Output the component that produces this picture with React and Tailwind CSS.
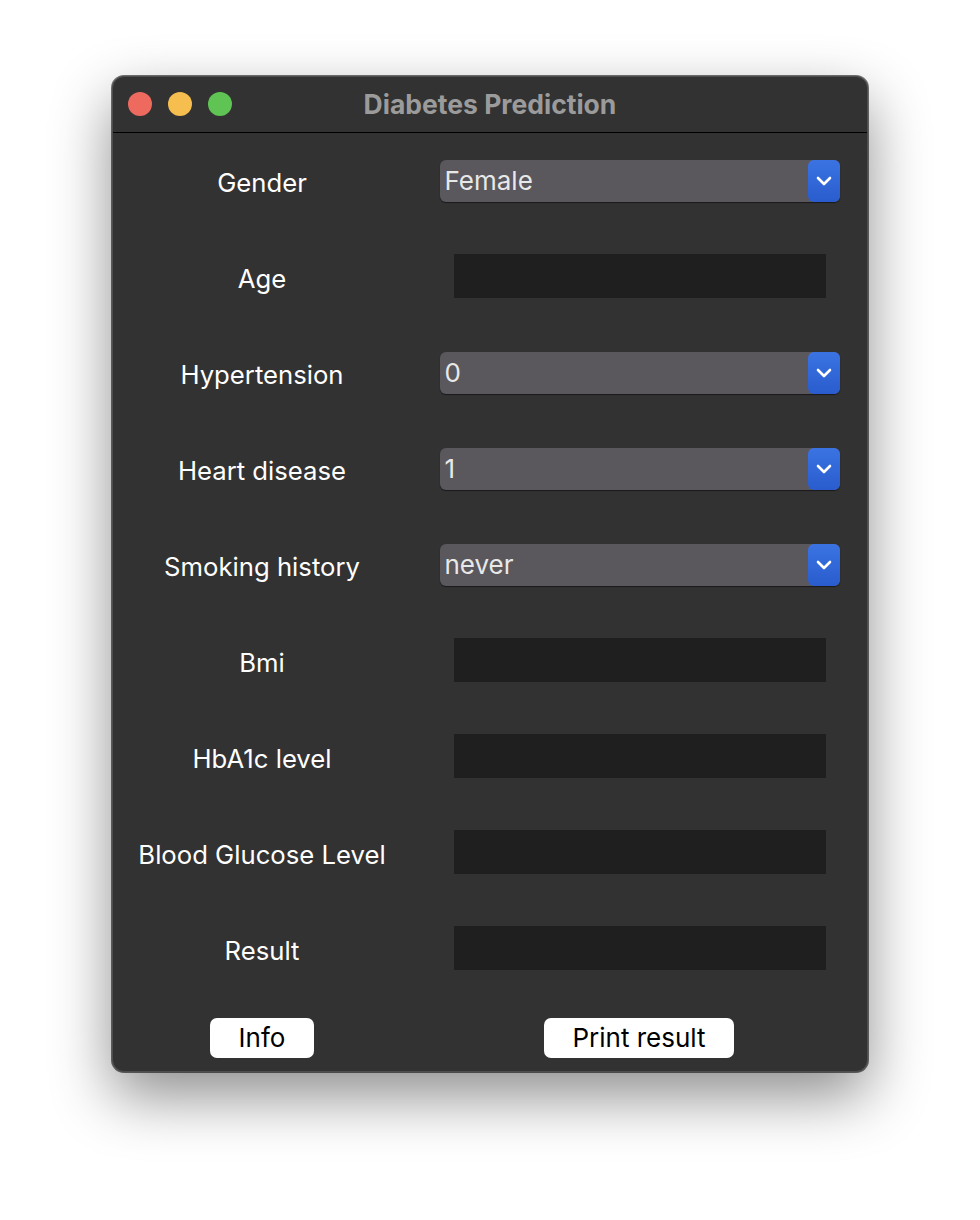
import React from 'react'

const font = { fontFamily: 'Inter, "Liberation Sans", sans-serif' }

const rows = [
  { label: 'Gender', type: 'select', value: 'Female' },
  { label: 'Age', type: 'entry' },
  { label: 'Hypertension', type: 'select', value: '0' },
  { label: 'Heart disease', type: 'select', value: '1' },
  { label: 'Smoking history', type: 'select', value: 'never' },
  { label: 'Bmi', type: 'entry' },
  { label: 'HbA1c level', type: 'entry' },
  { label: 'Blood Glucose Level', type: 'entry' },
  { label: 'Result', type: 'entry' },
]

const Select = ({ value }) => (
  <div className="flex h-[42px] w-[400px] items-center rounded-[6px] bg-[#5a575d] shadow-[0_1px_1px_rgba(0,0,0,0.5)]">
    <span className="flex-1 pl-[5px] text-[26px] leading-none text-[#e8e8e8]">{value}</span>
    <div className="flex h-[42px] w-[32px] items-center justify-center rounded-[6px] bg-gradient-to-b from-[#3a74e2] to-[#2a5cce]">
      <svg width="16" height="10" viewBox="0 0 16 10" fill="none">
        <path d="M2 2 L8 8 L14 2" stroke="white" strokeWidth="2.6" strokeLinecap="round" strokeLinejoin="round" />
      </svg>
    </div>
  </div>
)

const Entry = () => <div className="mb-[2px] h-[44px] w-[372px] bg-[#1f1f1f]" />

const App = () => {
  return (
    <div className="h-[1220px] w-[980px] bg-white pt-[76px] pl-[112px]" style={font}>
      <div className="flex h-[996px] w-[756px] flex-col overflow-hidden rounded-[12px] border border-[#4e4e4e] bg-[#323232] shadow-[0_0_0_1px_rgba(0,0,0,0.55),0_24px_60px_rgba(0,0,0,0.45)]">
        {/* title bar */}
        <div className="relative flex h-[56px] items-center justify-center border-b border-black">
          <div className="absolute left-[15px] top-[15px] flex gap-[16px]">
            <div className="h-[24px] w-[24px] rounded-full bg-[#ee6a5f]" />
            <div className="h-[24px] w-[24px] rounded-full bg-[#f5be4f]" />
            <div className="h-[24px] w-[24px] rounded-full bg-[#5fc454]" />
          </div>
          <span className="text-[26.5px] font-bold text-[#9b9b9b]">Diabetes Prediction</span>
        </div>

        {/* form */}
        <div className="flex flex-col">
          {rows.map((r) => (
            <div key={r.label} className="flex h-[96px] items-center">
              <div className="w-[298px] pt-[3px] text-center text-[25.7px] leading-none text-white">{r.label}</div>
              <div className="flex flex-1 justify-center pl-[1px]">
                {r.type === 'select' ? <Select value={r.value} /> : <Entry />}
              </div>
            </div>
          ))}
        </div>

        {/* buttons */}
        <div className="mt-[21px] flex items-center">
          <div className="flex w-[298px] justify-center">
            <button className="h-[40px] w-[104px] rounded-[7px] bg-white text-[26px] leading-none text-black">Info</button>
          </div>
          <div className="flex flex-1 justify-center">
            <button className="h-[40px] w-[190px] rounded-[7px] bg-white text-[26px] leading-none text-black">Print result</button>
          </div>
        </div>
      </div>
    </div>
  )
}

export default App
